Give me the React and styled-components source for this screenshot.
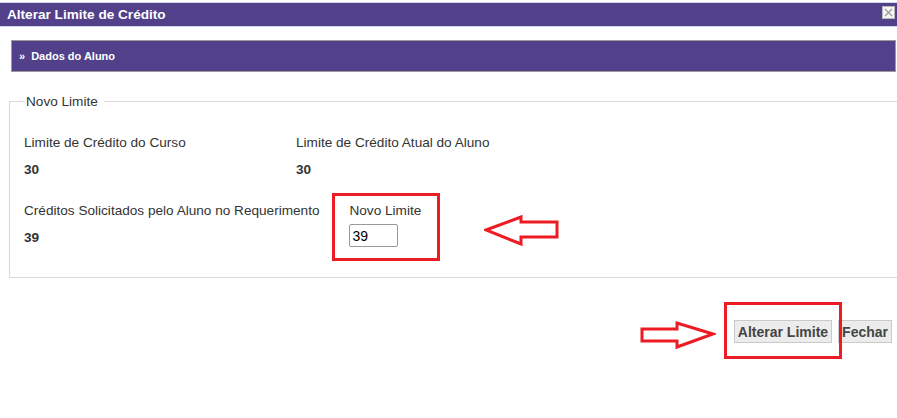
import React from "react";
import styled, { createGlobalStyle } from "styled-components";

const colors = {
	purple: "#52408a",
	text: "#333333",
	red: "#ed1c24",
	line: "#d8d8d8",
};

const GlobalStyle = createGlobalStyle`
	html, body {
		margin: 0;
		padding: 0;
		background: #ffffff;
		overflow: hidden;
	}
	body {
		font-family: "Liberation Sans", Arial, sans-serif;
		color: ${colors.text};
	}
`;

const Dialog = styled.div`
	position: relative;
	width: 897px;
	height: 418px;
	overflow: hidden;
	padding-top: 1px;
	box-sizing: border-box;
`;

const TitleBar = styled.div`
	display: flex;
	align-items: center;
	justify-content: space-between;
	height: 23px;
	margin-top: 1px;
	padding: 0 2px 0 7px;
	background: ${colors.purple};
	border-top: 1px solid #cdd9ea;
	border-bottom: 1px solid #cdd9ea;
	color: #ffffff;
	font-weight: bold;
	font-size: 13.6px;
`;

const CloseBox = styled.span`
	display: flex;
	align-items: center;
	justify-content: center;
	width: 11px;
	height: 11px;
	margin-top: -5px;
	background: #f4f4f4;
	border: 1px solid #b9b9b9;
`;

const Content = styled.div`
	padding: 13px 1px 0 11px;
`;

const SectionHeader = styled.div`
	display: flex;
	align-items: center;
	gap: 6px;
	height: 30px;
	padding-left: 7px;
	background: ${colors.purple};
	border: 1px solid #9a9a9a;
	color: #ffffff;
	font-weight: bold;
	font-size: 11px;
`;

const FieldSet = styled.fieldset`
	margin: 22px -30px 0 -2px;
	padding: 20px 14px 30px 14px;
	border: 1px solid ${colors.line};
	border-right: none;
`;

const Legend = styled.legend`
	margin-left: 1px;
	padding: 0 6px 0 1px;
	font-size: 13.6px;
	color: ${colors.text};
`;

const Row = styled.div`
	display: flex;
	gap: ${(p) => p.gap || 0}px;
	margin-top: ${(p) => p.top || 0}px;
`;

const Cell = styled.div`
	display: flex;
	flex-direction: column;
	width: ${(p) => (p.width ? `${p.width}px` : "auto")};
`;

const Label = styled.span`
	font-size: 13.6px;
	line-height: 15px;
`;

const Value = styled.span`
	margin-top: 12px;
	font-size: 13.6px;
	line-height: 15px;
	font-weight: bold;
`;

const Input = styled.input`
	width: 49px;
	height: 23px;
	margin-top: 6px;
	padding: 0 0 0 2px;
	box-sizing: border-box;
	border: 1px solid #9a9a9a;
	border-radius: 2px;
	font-family: "Liberation Sans", Arial, sans-serif;
	font-size: 14px;
	color: #000000;
`;

const Actions = styled.div`
	display: flex;
	justify-content: flex-end;
	gap: 6px;
	margin-top: 42px;
	padding-right: 4px;
`;

const Button = styled.button`
	height: 23px;
	padding: 0 3px;
	background: #ececec;
	border: 1px solid #cacaca;
	color: #454545;
	font-family: "Liberation Sans", Arial, sans-serif;
	font-weight: bold;
	font-size: 14px;
`;

const Highlight = styled.div`
	position: absolute;
	left: ${(p) => p.x}px;
	top: ${(p) => p.y}px;
	width: ${(p) => p.w}px;
	height: ${(p) => p.h}px;
	box-sizing: border-box;
	border: 3px solid ${colors.red};
	pointer-events: none;
`;

const Arrow = styled.svg`
	position: absolute;
	left: ${(p) => p.x}px;
	top: ${(p) => p.y}px;
	pointer-events: none;
`;

export default function App() {
	return (
		<>
			<GlobalStyle />
			<Dialog>
				<TitleBar>
					Alterar Limite de Crédito
					<CloseBox>
						<svg width="9" height="9" viewBox="0 0 9 9">
							<path d="M1 1L8 8M8 1L1 8" stroke="#9a9a9a" strokeWidth="1.2" />
						</svg>
					</CloseBox>
				</TitleBar>
				<Content>
					<SectionHeader>
						<span>»</span>Dados do Aluno
					</SectionHeader>
					<FieldSet>
						<Legend>Novo Limite</Legend>
						<Row top={6}>
							<Cell width={272}>
								<Label>Limite de Crédito do Curso</Label>
								<Value>30</Value>
							</Cell>
							<Cell>
								<Label>Limite de Crédito Atual do Aluno</Label>
								<Value>30</Value>
							</Cell>
						</Row>
						<Row top={26} gap={30}>
							<Cell>
								<Label>Créditos Solicitados pelo Aluno no Requerimento</Label>
								<Value>39</Value>
							</Cell>
							<Cell>
								<Label>Novo Limite</Label>
								<Input defaultValue="39" />
							</Cell>
						</Row>
					</FieldSet>
					<Actions>
						<Button>Alterar Limite</Button>
						<Button>Fechar</Button>
					</Actions>
				</Content>

				<Highlight x={332} y={193} w={108} h={68} />
				<Highlight x={724} y={302} w={118} h={57} />
				<Arrow x={484} y={214} width="76" height="33" viewBox="0 0 76 33">
					<polygon
						points="2,16 37,3 37,8 73,8 73,23 37,23 37,30"
						fill="#ffffff"
						stroke={colors.red}
						strokeWidth="3"
					/>
				</Arrow>
				<Arrow x={640} y={320} width="76" height="30" viewBox="0 0 76 30">
					<polygon
						points="2,9 37,9 37,3 73,14 37,27 37,21 2,21"
						fill="#ffffff"
						stroke={colors.red}
						strokeWidth="3"
					/>
				</Arrow>
			</Dialog>
		</>
	);
}
